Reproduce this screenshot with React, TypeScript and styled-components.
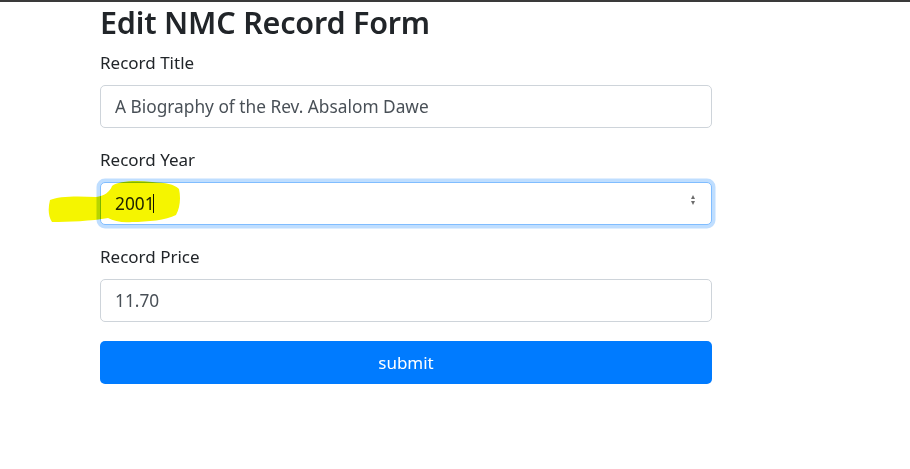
import React from 'react';
import styled, { createGlobalStyle, css } from 'styled-components';

const GlobalStyle = createGlobalStyle`
  html, body {
    margin: 0;
    padding: 0;
    background: #fff;
  }
  body {
    border-top: 2px solid #3a3a3a;
    font-family: "Noto Sans", "Open Sans", Arial, sans-serif;
    color: #212529;
  }
`;

const Page = styled.div`
  padding: 0 0 0 100px;
`;

const FormWrap = styled.form`
  width: 612px;
  display: flex;
  flex-direction: column;
`;

const Title = styled.h2`
  margin: 2px 0 9px;
  font-size: 30.5px;
  line-height: 36px;
  font-weight: 600;
  color: #212529;
  letter-spacing: -0.2px;
`;

const Group = styled.div`
  display: flex;
  flex-direction: column;
  margin-bottom: 18px;
`;

const Label = styled.label`
  font-size: 17px;
  line-height: 27px;
  margin-bottom: 9px;
  color: #212529;
`;

const Field = styled.div`
  position: relative;
`;

const Input = styled.input<{ $focused?: boolean }>`
  box-sizing: border-box;
  width: 100%;
  height: 43px;
  padding: 0 14px;
  font-family: inherit;
  font-size: 17.3px;
  color: #495057;
  background: #fff;
  border: 1px solid #ced4da;
  border-radius: 5px;
  outline: none;
  ${(p) =>
    p.$focused &&
    css`
      border-color: #80bdff;
      box-shadow: 0 0 0 3.5px rgba(0, 123, 255, 0.25);
      color: #212529;
    `}
`;

const Spinner = styled.div`
  position: absolute;
  right: 17px;
  top: 13px;
  display: flex;
  flex-direction: column;
  align-items: center;
  gap: 2px;
  pointer-events: none;
`;

const Arrow = styled.span<{ $down?: boolean }>`
  width: 0;
  height: 0;
  border-left: 2.5px solid transparent;
  border-right: 2.5px solid transparent;
  ${(p) =>
    p.$down
      ? css`border-top: 4px solid #6c6c6c;`
      : css`border-bottom: 4px solid #6c6c6c;`}
`;

const Caret = styled.span`
  position: absolute;
  left: 53px;
  top: 12px;
  width: 1px;
  height: 19px;
  background: #111;
  pointer-events: none;
`;

const Highlight = styled.svg`
  position: absolute;
  left: -52px;
  top: -2px;
  width: 140px;
  height: 46px;
  mix-blend-mode: multiply;
  pointer-events: none;
`;

const SubmitButton = styled.button`
  height: 43px;
  margin-top: 1px;
  border: none;
  border-radius: 5px;
  background: #007bff;
  color: #fff;
  font-family: inherit;
  font-size: 17px;
  cursor: pointer;
`;

const App: React.FC = () => {
  return (
    <>
      <GlobalStyle />
      <Page>
        <FormWrap onSubmit={(e) => e.preventDefault()}>
          <Title>Edit NMC Record Form</Title>

          <Group>
            <Label>Record Title</Label>
            <Input defaultValue="A Biography of the Rev. Absalom Dawe" />
          </Group>

          <Group>
            <Label>Record Year</Label>
            <Field>
              <Input $focused defaultValue="2001" />
              <Spinner>
                <Arrow />
                <Arrow $down />
              </Spinner>
              <Caret />
              <Highlight viewBox="0 0 140 46">
                <path
                  d="M2 20 C 10 16, 30 16, 48 17 C 56 16, 62 12, 64 6 C 70 1, 88 0, 104 2 C 118 3, 126 4, 131 9 C 133 18, 132 28, 128 35 C 118 40, 100 42, 84 42 C 74 43, 66 41, 60 38 C 44 41, 20 42, 4 42 C 0 36, 0 28, 2 20 Z"
                  fill="#f5f500"
                />
              </Highlight>
            </Field>
          </Group>

          <Group>
            <Label>Record Price</Label>
            <Input defaultValue="11.70" />
          </Group>

          <SubmitButton type="submit">submit</SubmitButton>
        </FormWrap>
      </Page>
    </>
  );
};

export default App;
